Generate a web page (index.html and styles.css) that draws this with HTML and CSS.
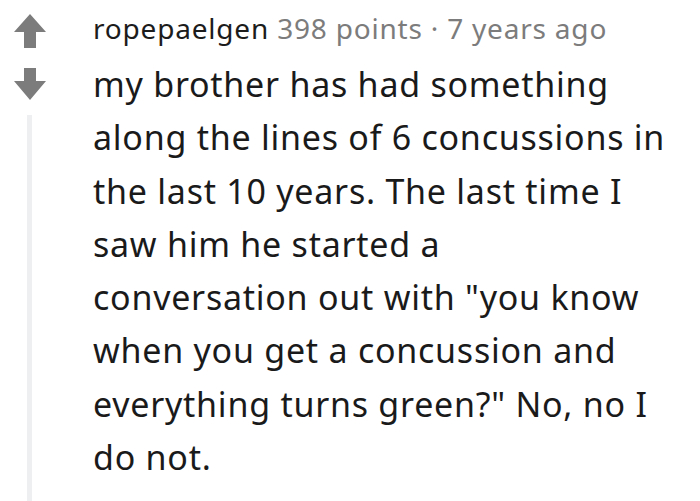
FILE: index.html
```html
<!DOCTYPE html>
<html>
<head>
<meta charset="utf-8">
<link rel="stylesheet" href="styles.css">
</head>
<body>
<div class="comment">
  <div class="gutter">
    <svg class="vote" width="34" height="36" viewBox="0 0 34 36"><path d="M17 1 L33 19 L23 19 L23 35 L11 35 L11 19 L1 19 Z" fill="#7c7c7c"/></svg>
    <svg class="vote down" width="34" height="36" viewBox="0 0 34 36"><path d="M11 1 L23 1 L23 14 L33 14 L17 33 L1 14 L11 14 Z" fill="#7c7c7c"/></svg>
    <div class="thread"></div>
  </div>
  <div class="main">
    <div class="meta"><span class="user">ropepaelgen</span> <span class="info">398 points · 7 years ago</span></div>
    <p class="body">my brother has had something<br>along the lines of 6 concussions in<br>the last 10 years. The last time I<br>saw him he started a<br>conversation out with "you know<br>when you get a concussion and<br>everything turns green?" No, no I<br>do not.</p>
  </div>
</div>
</body>
</html>
```
FILE: styles.css
```css
html, body { margin: 0; padding: 0; background: #fff; }
.comment { display: flex; width: 700px; height: 501px; }
.gutter { width: 93px; display: flex; flex-direction: column; align-items: flex-start; padding-left: 13px; box-sizing: border-box; }
.vote { display: block; margin-top: 13px; }
.vote.down { margin-top: 18px; }
.thread { width: 5px; background: #edeff1; flex: 1; margin-top: 12px; margin-left: 14px; }
.main { width: 600px; }
.meta { font-family: "Noto Sans", sans-serif; font-size: 28px; letter-spacing: 0.8px; margin-top: 10px; line-height: 36px; white-space: nowrap; }
.user { color: #1c1c1c; }
.info { color: #7c7c7c; }
.body { font-family: "Noto Sans", sans-serif; font-size: 34px; letter-spacing: 0.75px; line-height: 53.3px; color: #1a1a1b; margin: 12px 0 0; white-space: nowrap; }
```
